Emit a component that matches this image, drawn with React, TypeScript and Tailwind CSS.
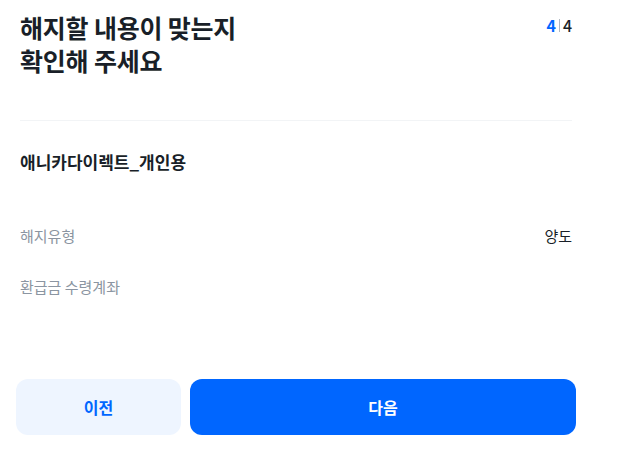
const font = { fontFamily: '"Noto Sans CJK KR", "Noto Sans", sans-serif' };

const rows = [
  { label: "해지유형", value: "양도" },
  { label: "환급금 수령계좌", value: "" },
];

export default function App() {
  return (
    <main className="w-[592px] bg-white h-[457px] flex flex-col" style={font}>
      {/* Header */}
      <div className="px-5 pt-[11px] flex items-start justify-between">
        <h1 className="text-[25px] leading-[33px] font-bold text-[#191f28] tracking-[-0.2px]">
          해지할 내용이 맞는지
          <br />
          확인해 주세요
        </h1>
        <div className="flex items-center text-[16px] leading-[22px] font-bold mt-[3px]">
          <span className="text-[#0066ff]">4</span>
          <span className="w-px h-[13px] bg-[#b0b8c1] mx-[3px]" />
          <span className="text-[#191f28] font-medium">4</span>
        </div>
      </div>

      <div className="mx-5 mt-[43px] h-px bg-[#f2f4f6]" />

      {/* Product */}
      <div className="px-5 mt-[29px] text-[17px] leading-[24px] font-bold text-[#191f28]">
        애니카다이렉트_개인용
      </div>

      {/* Details */}
      <div className="px-5 mt-[50px] flex flex-col gap-[27px]">
        {rows.map((row) => (
          <div key={row.label} className="flex items-center justify-between text-[15px] leading-[24px]">
            <span className="text-[#8b95a1]">{row.label}</span>
            <span className="text-[#191f28]">{row.value}</span>
          </div>
        ))}
      </div>

      {/* Buttons */}
      <div className="px-4 mt-auto mb-[22px] flex gap-[9px]">
        <button className="w-[165px] h-[56px] rounded-[12px] bg-[#eef5ff] text-[#0066ff] text-[16px] font-bold">
          이전
        </button>
        <button className="flex-1 h-[56px] rounded-[12px] bg-[#0066ff] text-white text-[16px] font-bold">
          다음
        </button>
      </div>
    </main>
  );
}
